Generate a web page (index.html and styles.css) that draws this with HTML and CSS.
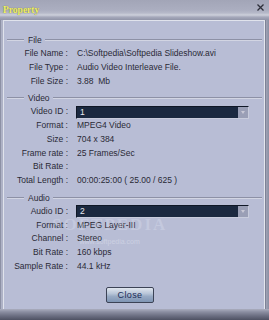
FILE: index.html
```html
<!DOCTYPE html>
<html>
<head>
<meta charset="utf-8">
<link rel="stylesheet" href="styles.css">
</head>
<body>
<div class="window">
  <div class="titlebar">
    <span class="title">Property</span>
    <svg class="xbtn" width="7" height="7" viewBox="0 0 7 7"><path d="M0.5 0.5 L6.5 6.5 M6.5 0.5 L0.5 6.5" stroke="#2e2f3a" stroke-width="1.3" fill="none"/></svg>
  </div>
  <div class="middle">
    <div class="lframe"></div>
    <div class="panel">
      <section class="group">
        <div class="ghead"><span class="gline short"></span><span class="glabel">File</span><span class="gline long"></span></div>
        <div class="row"><span class="lbl">File Name :</span><span class="val">C:\Softpedia\Softpedia Slideshow.avi</span></div>
        <div class="row"><span class="lbl">File Type :</span><span class="val">Audio Video Interleave File.</span></div>
        <div class="row"><span class="lbl">File Size :</span><span class="val">3.88&nbsp; Mb</span></div>
      </section>
      <section class="group">
        <div class="ghead"><span class="gline short"></span><span class="glabel">Video</span><span class="gline long"></span></div>
        <div class="row"><span class="lbl">Video ID :</span><div class="select"><span class="cur">1</span><span class="arrow"><i class="tri"></i></span></div></div>
        <div class="row"><span class="lbl">Format :</span><span class="val">MPEG4 Video</span></div>
        <div class="row"><span class="lbl">Size :</span><span class="val">704 x 384</span></div>
        <div class="row"><span class="lbl">Frame rate :</span><span class="val">25 Frames/Sec</span></div>
        <div class="row"><span class="lbl">Bit Rate :</span><span class="val"></span></div>
        <div class="row"><span class="lbl">Total Length :</span><span class="val">00:00:25:00 ( 25.00 / 625 )</span></div>
      </section>
      <section class="group">
        <div class="ghead"><span class="gline short"></span><span class="glabel">Audio</span><span class="gline long"></span></div>
        <div class="row"><span class="lbl">Audio ID :</span><div class="select"><span class="cur">2</span><span class="arrow"><i class="tri"></i></span></div></div>
        <div class="row"><span class="lbl">Format :</span><span class="val">MPEG Layer-III</span></div>
        <div class="row"><span class="lbl">Channel :</span><span class="val">Stereo</span></div>
        <div class="row"><span class="lbl">Bit Rate :</span><span class="val">160 kbps</span></div>
        <div class="row"><span class="lbl">Sample Rate :</span><span class="val">44.1 kHz</span></div>
      </section>
      <div class="btnrow"><button class="btn">Close</button></div>
    </div>
    <div class="rframe"></div>
  </div>
  <div class="bottombar"></div>
  <div class="wm"><span class="wm1">SOFTPEDIA</span><span class="wm2">www.softpedia.com</span></div>
</div>
</body>
</html>
```

FILE: styles.css
```css
html, body {
  margin: 0;
  padding: 0;
}
body {
  width: 269px;
  height: 320px;
  overflow: hidden;
  font-family: "Liberation Sans", Arial, sans-serif;
  background: #b8bdd5;
}
.window {
  position: relative;
  width: 269px;
  height: 320px;
  display: flex;
  flex-direction: column;
  background: #b8bdd5;
}
.titlebar {
  height: 20px;
  flex: none;
  display: flex;
  justify-content: space-between;
  align-items: center;
  padding: 0 5px 0 3px;
  box-sizing: border-box;
  background: linear-gradient(#a2a5b7 0px, #abaec0 10px, #b6b9c9 13px, #cdd0db 15px, #a6a9bb 17px, #9094a8 20px);
}
.title {
  font-family: "Liberation Serif", serif;
  font-weight: bold;
  font-size: 9.5px;
  color: #f2f268;
  text-shadow: 0 0 1px #5a5a40;
  line-height: 12px;
}
.xbtn {
  align-self: flex-start;
  margin-top: 4px;
  display: block;
}
.middle {
  flex: 1;
  display: flex;
  min-height: 0;
}
.lframe {
  width: 3px;
  flex: none;
  background: linear-gradient(to right, #8d91a5 1px, #aeb2c6 1px);
}
.rframe {
  width: 4px;
  flex: none;
  background: linear-gradient(to right, #7e8296 1px, #9fa3b6 1px, #8a8ea2 4px);
}
.panel {
  flex: 1;
  border-top: 1px solid #e0e3ec;
  border-left: 1px solid #e0e3ec;
  border-right: 1px solid #e4e6ee;
  padding-top: 12px;
  display: flex;
  flex-direction: column;
  color: #2a2a36;
  font-size: 8.5px;
}
.group + .group {
  margin-top: 3px;
}
.ghead {
  height: 14px;
  display: flex;
  align-items: center;
  margin: 0 2px 0 3px;
}
.gline {
  height: 0;
  border-top: 1px solid #8d91a6;
  border-bottom: 1px solid #d2d5e3;
}
.gline.short {
  width: 17px;
}
.gline.long {
  flex: 1;
}
.glabel {
  padding: 0 3px 0 4px;
  line-height: 14px;
}
.row {
  display: flex;
  align-items: center;
  height: 13.75px;
  line-height: 13.75px;
}
.lbl {
  width: 64px;
  flex: none;
  text-align: right;
  white-space: nowrap;
}
.val {
  margin-left: 9px;
  white-space: nowrap;
}
.select {
  margin-left: 8px;
  width: 173px;
  height: 13px;
  box-sizing: border-box;
  display: flex;
  background: #1b2940;
  border: 1px solid #0f1726;
  border-right-color: #c8ccdc;
  border-bottom-color: #c8ccdc;
}
.cur {
  flex: 1;
  color: #e8eaf2;
  padding-left: 3px;
  line-height: 11px;
}
.arrow {
  width: 10px;
  background: #9a9fb6;
  display: flex;
  align-items: center;
  justify-content: center;
}
.tri {
  width: 0;
  height: 0;
  border-left: 2.5px solid transparent;
  border-right: 2.5px solid transparent;
  border-top: 3px solid #c9c9d6;
}
.btnrow {
  display: flex;
  justify-content: center;
  padding-right: 8px;
  margin-top: 13px;
}
.btn {
  width: 48px;
  height: 16px;
  box-sizing: border-box;
  padding: 0;
  border: 1px solid #3c4356;
  border-radius: 2px;
  background: linear-gradient(#e0e6ee 0%, #b8c5d8 40%, #98aac4 60%, #7f95b4 100%);
  font-family: "Liberation Sans", Arial, sans-serif;
  font-size: 9px;
  letter-spacing: 0.4px;
  color: #1c2c58;
  line-height: 14px;
}
.bottombar {
  height: 11px;
  flex: none;
  background: linear-gradient(#aaadbe 0px, #8a8da0 3px, #6a6d80 7px, #4e5162 11px);
}
.wm {
  position: absolute;
  left: 52px;
  top: 216px;
  display: flex;
  flex-direction: column;
  align-items: center;
  pointer-events: none;
}
.wm1 {
  font-family: "Liberation Serif", serif;
  font-weight: bold;
  font-size: 17px;
  letter-spacing: 2px;
  color: rgba(230, 233, 245, 0.28);
  line-height: 18px;
}
.wm2 {
  font-size: 7px;
  color: rgba(235, 238, 248, 0.4);
  line-height: 8px;
  margin-top: 4px;
}
```
